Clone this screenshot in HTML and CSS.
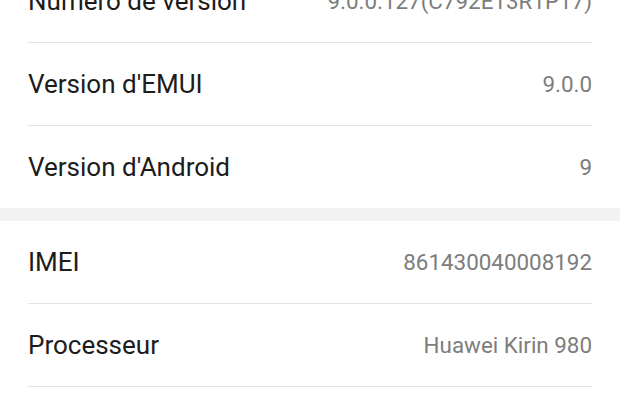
FILE: index.html
```html
<!DOCTYPE html>
<html lang="fr">
<head>
<meta charset="utf-8">
<link rel="stylesheet" href="styles.css">
</head>
<body>
<div class="list">
  <div class="group">
    <div class="row"><span class="label">Numéro de version</span><span class="value">9.0.0.127(C792E13R1P17)</span></div>
    <div class="row"><span class="label">Version d'EMUI</span><span class="value">9.0.0</span></div>
    <div class="row"><span class="label">Version d'Android</span><span class="value">9</span></div>
  </div>
  <div class="band"></div>
  <div class="group">
    <div class="row"><span class="label">IMEI</span><span class="value">861430040008192</span></div>
    <div class="row"><span class="label">Processeur</span><span class="value">Huawei Kirin 980</span></div>
  </div>
</div>
</body>
</html>
```
FILE: styles.css
```css
html, body {
  margin: 0;
  padding: 0;
  background: #ffffff;
  overflow: hidden;
}
body {
  font-family: Roboto, "Liberation Sans", sans-serif;
}
.list {
  margin-top: -40px;
}
.row {
  display: flex;
  justify-content: space-between;
  align-items: center;
  height: 82px;
  margin: 0 28px;
  border-bottom: 1px solid #e4e4e4;
}
.group:first-child .row:last-child {
  border-bottom: none;
}
.band {
  height: 13px;
  background: #f2f2f2;
}
.label {
  font-size: 26px;
  color: #1c1c1c;
}
.value {
  font-size: 22.4px;
  color: #7d7d7d;
}
```
